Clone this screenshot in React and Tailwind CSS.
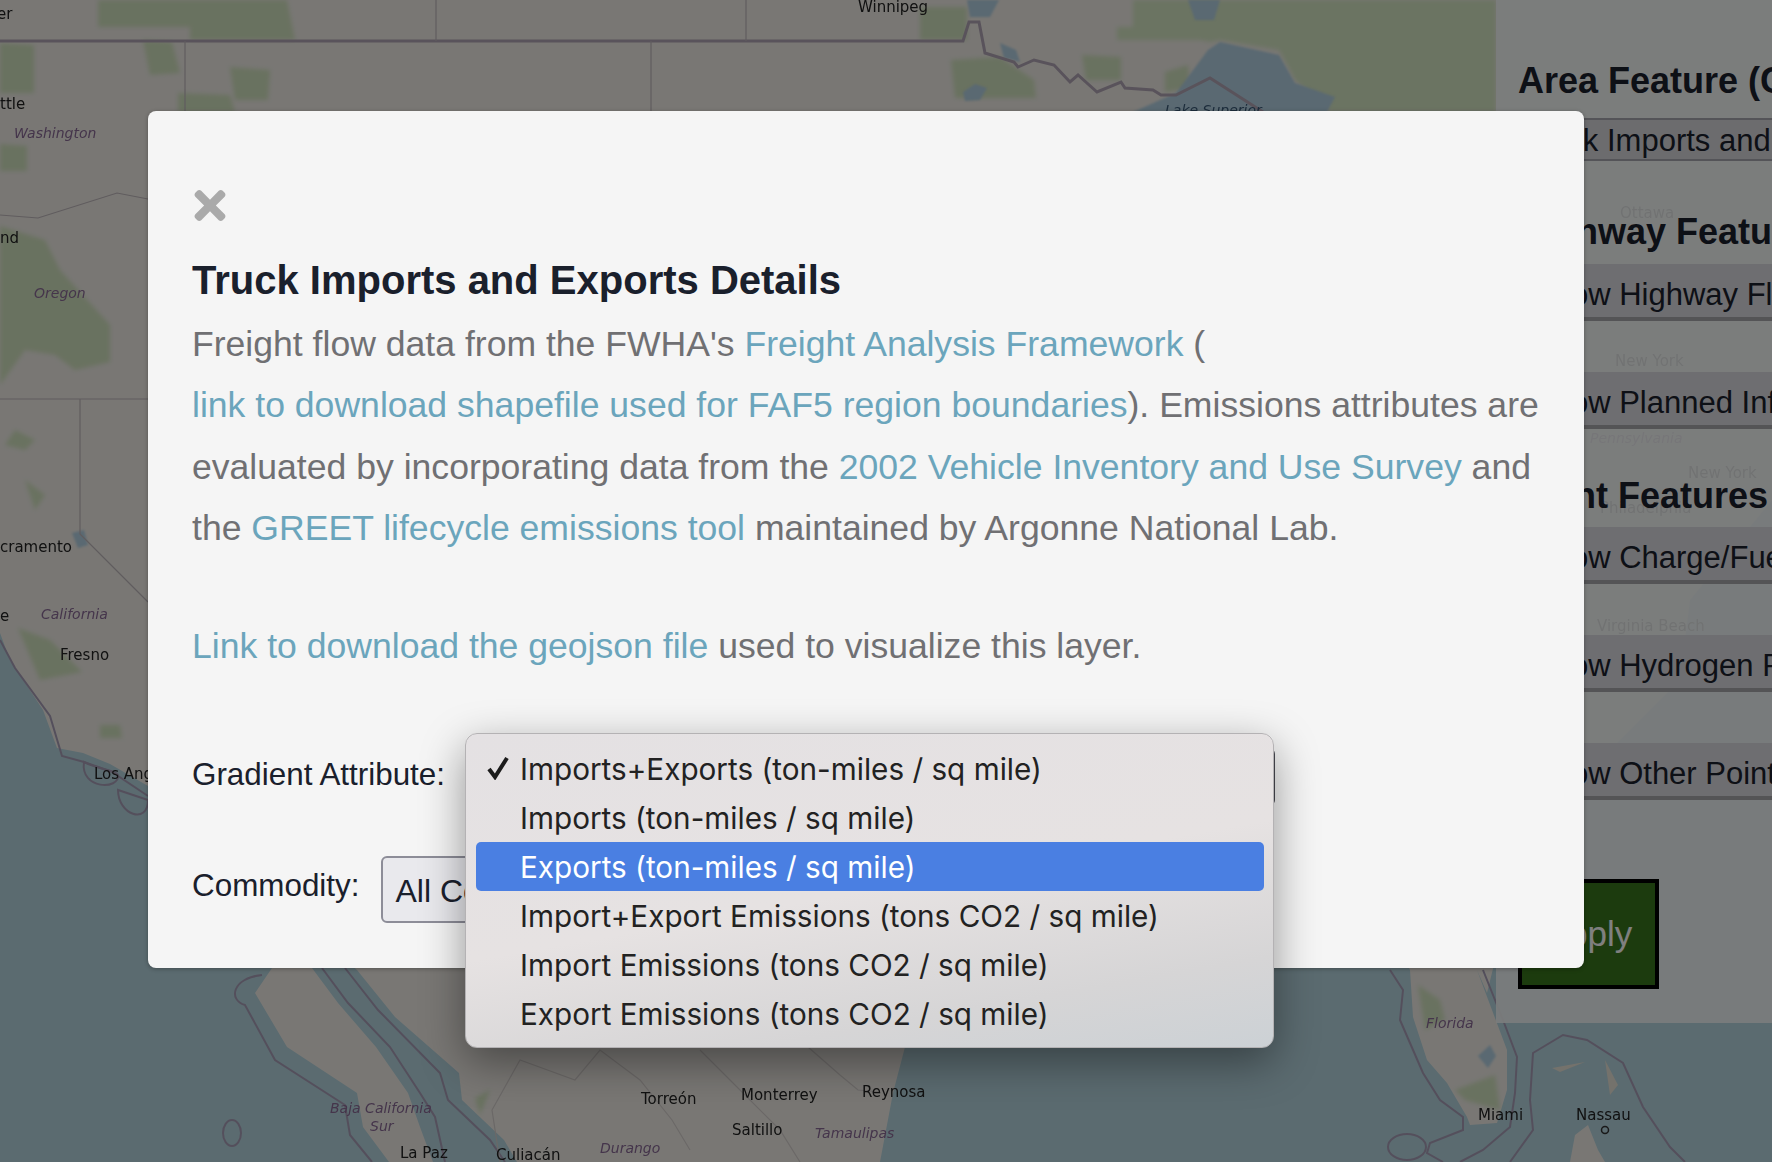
import { FaTimes } from "react-icons/fa";

const sans = "font-['Liberation_Sans',Arial,sans-serif]";

const landPath =
  "M0 0H1772V500L1690 600L1680 680L1600 760L1510 900L1487 993L1477 970L1507 1050L1507 1090L1497 1123L1470 1125L1467 1117L1447 1083L1427 1060L1413 1017L1410 970L1405 960L930 960L905 1047L893 1093L880 1162H517L504 1140L462 1100L459 1073L395 1017L357 970L340 955L312 968L338 1003L376 1047L408 1093L420 1127L433 1162H389L363 1127L357 1093L287 1047L255 993L272 968L148 786L110 764L83 753L57 748L43 710L10 660L0 633Z";

const greens = [
  "M1224 0H1496V112H1330L1295 80L1279 50L1220 40L1210 42L1200 40H1117V27H1133V0H1224V33L1190 35L1188 20L1224 20Z",
  "M98 0H287L295 40H190L190 27H98Z",
  "M0 43L34 45L34 93L0 93Z",
  "M143 40L172 42L180 73L150 75Z",
  "M230 67L270 70L268 100L235 100Z",
  "M178 93L230 95L235 112H178Z",
  "M920 7L967 7L967 40L920 40Z",
  "M951 60L1000 57L1034 80L1036 98L955 98Z",
  "M1082 55L1121 57L1121 80L1086 80Z",
  "M1165 72L1188 65L1190 88L1165 92Z",
  "M0 144L27 146L27 171L0 171Z",
  "M0 226L45 240L60 270L110 325L110 362L75 370L55 355L25 350L0 385Z",
  "M18 628L50 640L82 672L40 680Z",
  "M100 725L120 725L122 738L100 738Z",
  "M15 430L35 440L25 450L5 445Z",
  "M25 480L45 495L35 510Z",
  "M1418 985L1440 1000L1445 1020L1425 1030Z",
  "M1455 1090L1495 1075L1500 1110L1465 1100Z",
  "M475 1098L490 1090L480 1115Z",
];

const lakes = [
  "M1133 112L1176 93L1208 50L1220 42L1279 55L1295 83L1335 97L1327 112Z",
  "M967 0H999L990 17L970 17Z",
  "M1188 0H1220L1214 20L1195 20Z",
  "M963 92L975 84L987 88L980 100L965 101Z",
  "M1000 43L1016 50L1020 62L1004 58Z",
  "M1478 1056L1490 1045L1496 1056L1488 1068Z",
  "M72 533L84 530L88 545L78 548Z",
];

const borders = [
  "M0 41H963L969 22H979L985 53L1014 62L1018 67L1034 60L1054 65L1070 82L1078 75L1097 92L1121 82L1125 88L1153 90L1161 95L1176 95L1210 78L1263 112",
  "M0 215L38 218L117 193L148 199",
  "M0 399H148",
  "M80 399V534L148 602",
  "M651 41V112",
  "M185 41V112",
  "M436 0V41",
  "M746 0V41",
];

const coastLines = [
  "M0 640L15 668L50 716L62 756L84 762L112 772L148 796",
  "M84 762C80 790 120 790 118 775C116 770 100 770 84 762Z",
  "M118 790C118 815 148 825 148 800Z",
  "M262 975C232 978 228 1000 245 1005L275 1060L345 1105L350 1135L372 1162",
  "M322 968L348 1003L390 1047L420 1093L435 1117L445 1162",
  "M345 968L378 1010L440 1073L448 1100L490 1140L505 1162",
  "M1390 970L1403 990L1400 1020L1423 1073L1440 1100L1463 1117L1463 1130L1430 1143L1427 1153L1443 1162",
  "M1483 970L1503 1020L1517 1057L1515 1093L1510 1127L1483 1150L1460 1162",
  "M1510 1162L1533 1130L1530 1100L1533 1053L1563 1035L1587 1040L1623 1063L1643 1107L1670 1147L1685 1162",
];

const thinLines = [
  "M500 1162L492 1110L520 1060L575 1080L600 1050L640 1080L672 1120L690 1150",
  "M700 1050L740 1090L780 1130L800 1162",
  "M800 1040L840 1075L858 1090L880 1092",
];

const labels = [
  { t: "Winnipeg", x: 858, y: 12 },
  { t: "er", x: -3, y: 19 },
  { t: "ttle", x: 0, y: 109 },
  { t: "nd", x: 0, y: 243 },
  { t: "cramento", x: 0, y: 552 },
  { t: "e", x: 0, y: 621 },
  { t: "Fresno", x: 60, y: 660 },
  { t: "Los Angeles", x: 94, y: 779 },
  { t: "La Paz", x: 400, y: 1158 },
  { t: "Culiacán", x: 496, y: 1160 },
  { t: "Torreón", x: 641, y: 1104 },
  { t: "Monterrey", x: 741, y: 1100 },
  { t: "Reynosa", x: 862, y: 1097 },
  { t: "Saltillo", x: 732, y: 1135 },
  { t: "Miami", x: 1478, y: 1120 },
  { t: "Nassau", x: 1576, y: 1120 },
  { t: "Ottawa", x: 1620, y: 218 },
  { t: "New York", x: 1615, y: 366 },
  { t: "New York", x: 1688, y: 478 },
  { t: "Philadelphia", x: 1600, y: 513 },
  { t: "Virginia Beach", x: 1597, y: 631 },
];

const regions = [
  { t: "Washington", x: 14, y: 138 },
  { t: "Oregon", x: 34, y: 298 },
  { t: "California", x: 41, y: 619 },
  { t: "Baja California", x: 330, y: 1113 },
  { t: "Sur", x: 370, y: 1131 },
  { t: "Durango", x: 600, y: 1153 },
  { t: "Tamaulipas", x: 815, y: 1138 },
  { t: "Florida", x: 1426, y: 1028 },
  { t: "Pennsylvania", x: 1590, y: 443 },
];

function BaseMap() {
  return (
    <svg viewBox="0 0 1772 1162" className="absolute inset-0 w-full h-full blur-[0.7px]">
      <rect width="1772" height="1162" fill="#b6d6e0" />
      <path d={landPath} fill="#f2efe9" />
      <g className="blur-[2px]">
        {greens.map((d, i) => (
          <path key={i} d={d} fill={i === 0 ? "#d6e8c4" : "#d3e4c0"} />
        ))}
      </g>
      <g className="blur-[1px]">
        {lakes.map((d, i) => (
          <path key={i} d={d} fill="#b4d2e4" />
        ))}
      </g>
      {coastLines.map((d, i) => (
        <path key={i} d={d} fill="none" stroke="#a99fb8" strokeWidth="2" />
      ))}
      {thinLines.map((d, i) => (
        <path key={i} d={d} fill="none" stroke="#d6d0ce" strokeWidth="1.2" />
      ))}
      {borders.map((d, i) => (
        <path key={i} d={d} fill="none" stroke={i === 0 ? "#b3a6b6" : "#c0b8bc"} strokeWidth={i === 0 ? 3 : 1.2} />
      ))}
      <ellipse cx="1407" cy="1147" rx="19" ry="13" fill="none" stroke="#a99fb8" strokeWidth="2" />
      <ellipse cx="232" cy="1133" rx="9" ry="13" fill="none" stroke="#a99fb8" strokeWidth="2" />
      <path d="M1575 1135L1588 1125L1598 1150L1605 1162H1570Z" fill="#f2efe9" />
      <path d="M1552 1068L1585 1062L1560 1072Z M1605 1060L1618 1085L1610 1095Z" fill="#e8e4d8" />
      <circle cx="1605" cy="1130" r="3.5" fill="none" stroke="#333" strokeWidth="1.5" />
      {labels.map((l) => (
        <text key={l.t + l.x} x={l.x} y={l.y} fontSize="15" fill="#222" fontFamily="'DejaVu Sans', sans-serif">
          {l.t}
        </text>
      ))}
      {regions.map((l) => (
        <text key={l.t} x={l.x} y={l.y} fontSize="14" fontStyle="italic" fill="#8a6a96" fontFamily="'DejaVu Sans', sans-serif">
          {l.t}
        </text>
      ))}
      <text x="1165" y="115" fontSize="14" fontStyle="italic" fill="#3a5a78" fontFamily="'DejaVu Sans', sans-serif">
        Lake Superior
      </text>
    </svg>
  );
}

function SideButton({ label, className }) {
  return (
    <div className={"h-[57px] pl-[15px] pt-[9px] flex items-center whitespace-nowrap text-[31px] text-[#1a202c] bg-[#dcdde2] border-b-4 border-[#a8a8ac] " + className}>
      {label}
    </div>
  );
}

function SidePanel() {
  const head = "h-[40px] leading-[40px] text-[36px] font-bold whitespace-nowrap text-[#1a202c]";
  return (
    <div className="absolute top-0 right-0 w-[276px] h-[1023px] pl-[22px] pt-[61px] overflow-hidden bg-[#f7fbfb]/90">
      <h3 className={head}>Area Feature (Commodity)</h3>
      <div className="mt-[17px] h-[43px] pl-[4px] pt-[4px] flex items-center whitespace-nowrap text-[31px] text-[#1a202c] bg-[#d8d9dc] border-y-2 border-[#a8a8b0]">
        Truck Imports and Exports
      </div>
      <h3 className={head + " mt-[51px]"}>Highway Features</h3>
      <SideButton label="Show Highway Flows" className="mt-[12px]" />
      <SideButton label="Show Planned Infrastructure" className="mt-[51px]" />
      <h3 className={head + " mt-[47px]"}>Point Features</h3>
      <SideButton label="Show Charge/Fuel Stations" className="mt-[11px]" />
      <SideButton label="Show Hydrogen Plants" className="mt-[51px]" />
      <SideButton label="Show Other Points" className="mt-[51px]" />
      <button className="mt-[79px] w-[141px] h-[110px] flex items-center justify-center text-[35px] text-white bg-[#38761c] border-4 border-black">
        Apply
      </button>
    </div>
  );
}

const options = [
  "Imports+Exports (ton-miles / sq mile)",
  "Imports (ton-miles / sq mile)",
  "Exports (ton-miles / sq mile)",
  "Import+Export Emissions (tons CO2 / sq mile)",
  "Import Emissions (tons CO2 / sq mile)",
  "Export Emissions (tons CO2 / sq mile)",
];

function OptionMenu() {
  return (
    <div className="absolute left-[317px] top-[622px] w-[809px] h-[315px] pt-[10px] pl-[10px] pr-[9px] rounded-[12px] border border-[#b4b2b4] bg-[linear-gradient(170deg,#e4e1e3_0%,#e6e2e2_50%,#d6d5d6_80%,#ccd1d5_100%)] shadow-[0_14px_44px_rgba(0,0,0,0.4)] font-['Inter',sans-serif] text-[29.7px] text-[#222]">
      {options.map((o, i) => (
        <div
          key={o}
          className={"relative h-[49px] pl-[44px] pt-[2px] flex items-center whitespace-nowrap rounded-[5px] " + (i === 2 ? "bg-[#4a7fe2] text-white" : "")}
        >
          {i === 0 && (
            <svg viewBox="0 0 24 24" className="absolute left-[10px] top-[12px] w-[24px] h-[24px]">
              <path d="M3 13L9 21L21 2" fill="none" stroke="#1c1c1c" strokeWidth="4" />
            </svg>
          )}
          {o}
        </div>
      ))}
    </div>
  );
}

function Modal() {
  const link = "text-[#6ba5bc]";
  const selectBox = "h-full w-[800px] pl-[12px] pt-[2px] flex items-center whitespace-nowrap overflow-hidden rounded-[6px] bg-[#e9e9ed] text-[32px] text-[#1a202c]";
  return (
    <div className="relative w-[1436px] h-[857px] pt-[72px] pl-[44px] rounded-[8px] bg-[#f5f5f5] shadow-[0_1px_4px_rgba(0,0,0,0.3)]">
      <FaTimes className="ml-[2px] w-[32px] h-[45px] text-[#aaaaaa]" />
      <h2 className="mt-[32px] h-[40px] leading-[40px] text-[40px] font-bold text-[#1a202c]">
        Truck Imports and Exports Details
      </h2>
      <p className="mt-[14px] w-[1360px] text-[35.6px] leading-[61.4px] text-[#707073]">
        Freight flow data from the FWHA's <a className={link}>Freight Analysis Framework</a> (<br />
        <a className={link}>link to download shapefile used for FAF5 region boundaries</a>). Emissions attributes are evaluated by incorporating data from the <a className={link}>2002 Vehicle Inventory and Use Survey</a> and the <a className={link}>GREET lifecycle emissions tool</a> maintained by Argonne National Lab.
      </p>
      <p className="mt-[56px] text-[35.6px] leading-[61.4px] text-[#707073]">
        <a className={link}>Link to download the geojson file</a> used to visualize this layer.
      </p>
      <div className="mt-[71px] h-[58px] flex items-center text-[31.4px] text-[#1a202c]">
        <span className="pb-[4px]">Gradient Attribute:</span>
        <div className={selectBox + " ml-[30px] border-2 border-[#4a4a52]"}>Imports+Exports (ton-miles / sq mile)</div>
      </div>
      <div className="mt-[50px] h-[67px] flex items-center text-[31.4px] text-[#1a202c]">
        <span className="pb-[7px]">Commodity:</span>
        <div className={selectBox + " ml-[22px] border-2 border-[#8d8d98]"}>All Commodities</div>
      </div>
      <OptionMenu />
    </div>
  );
}

export default function App() {
  return (
    <div className={"relative w-full h-[1162px] overflow-hidden " + sans}>
      <BaseMap />
      <SidePanel />
      <div className="absolute inset-0 bg-black/50 pt-[111px] pl-[148px]">
        <Modal />
      </div>
    </div>
  );
}
